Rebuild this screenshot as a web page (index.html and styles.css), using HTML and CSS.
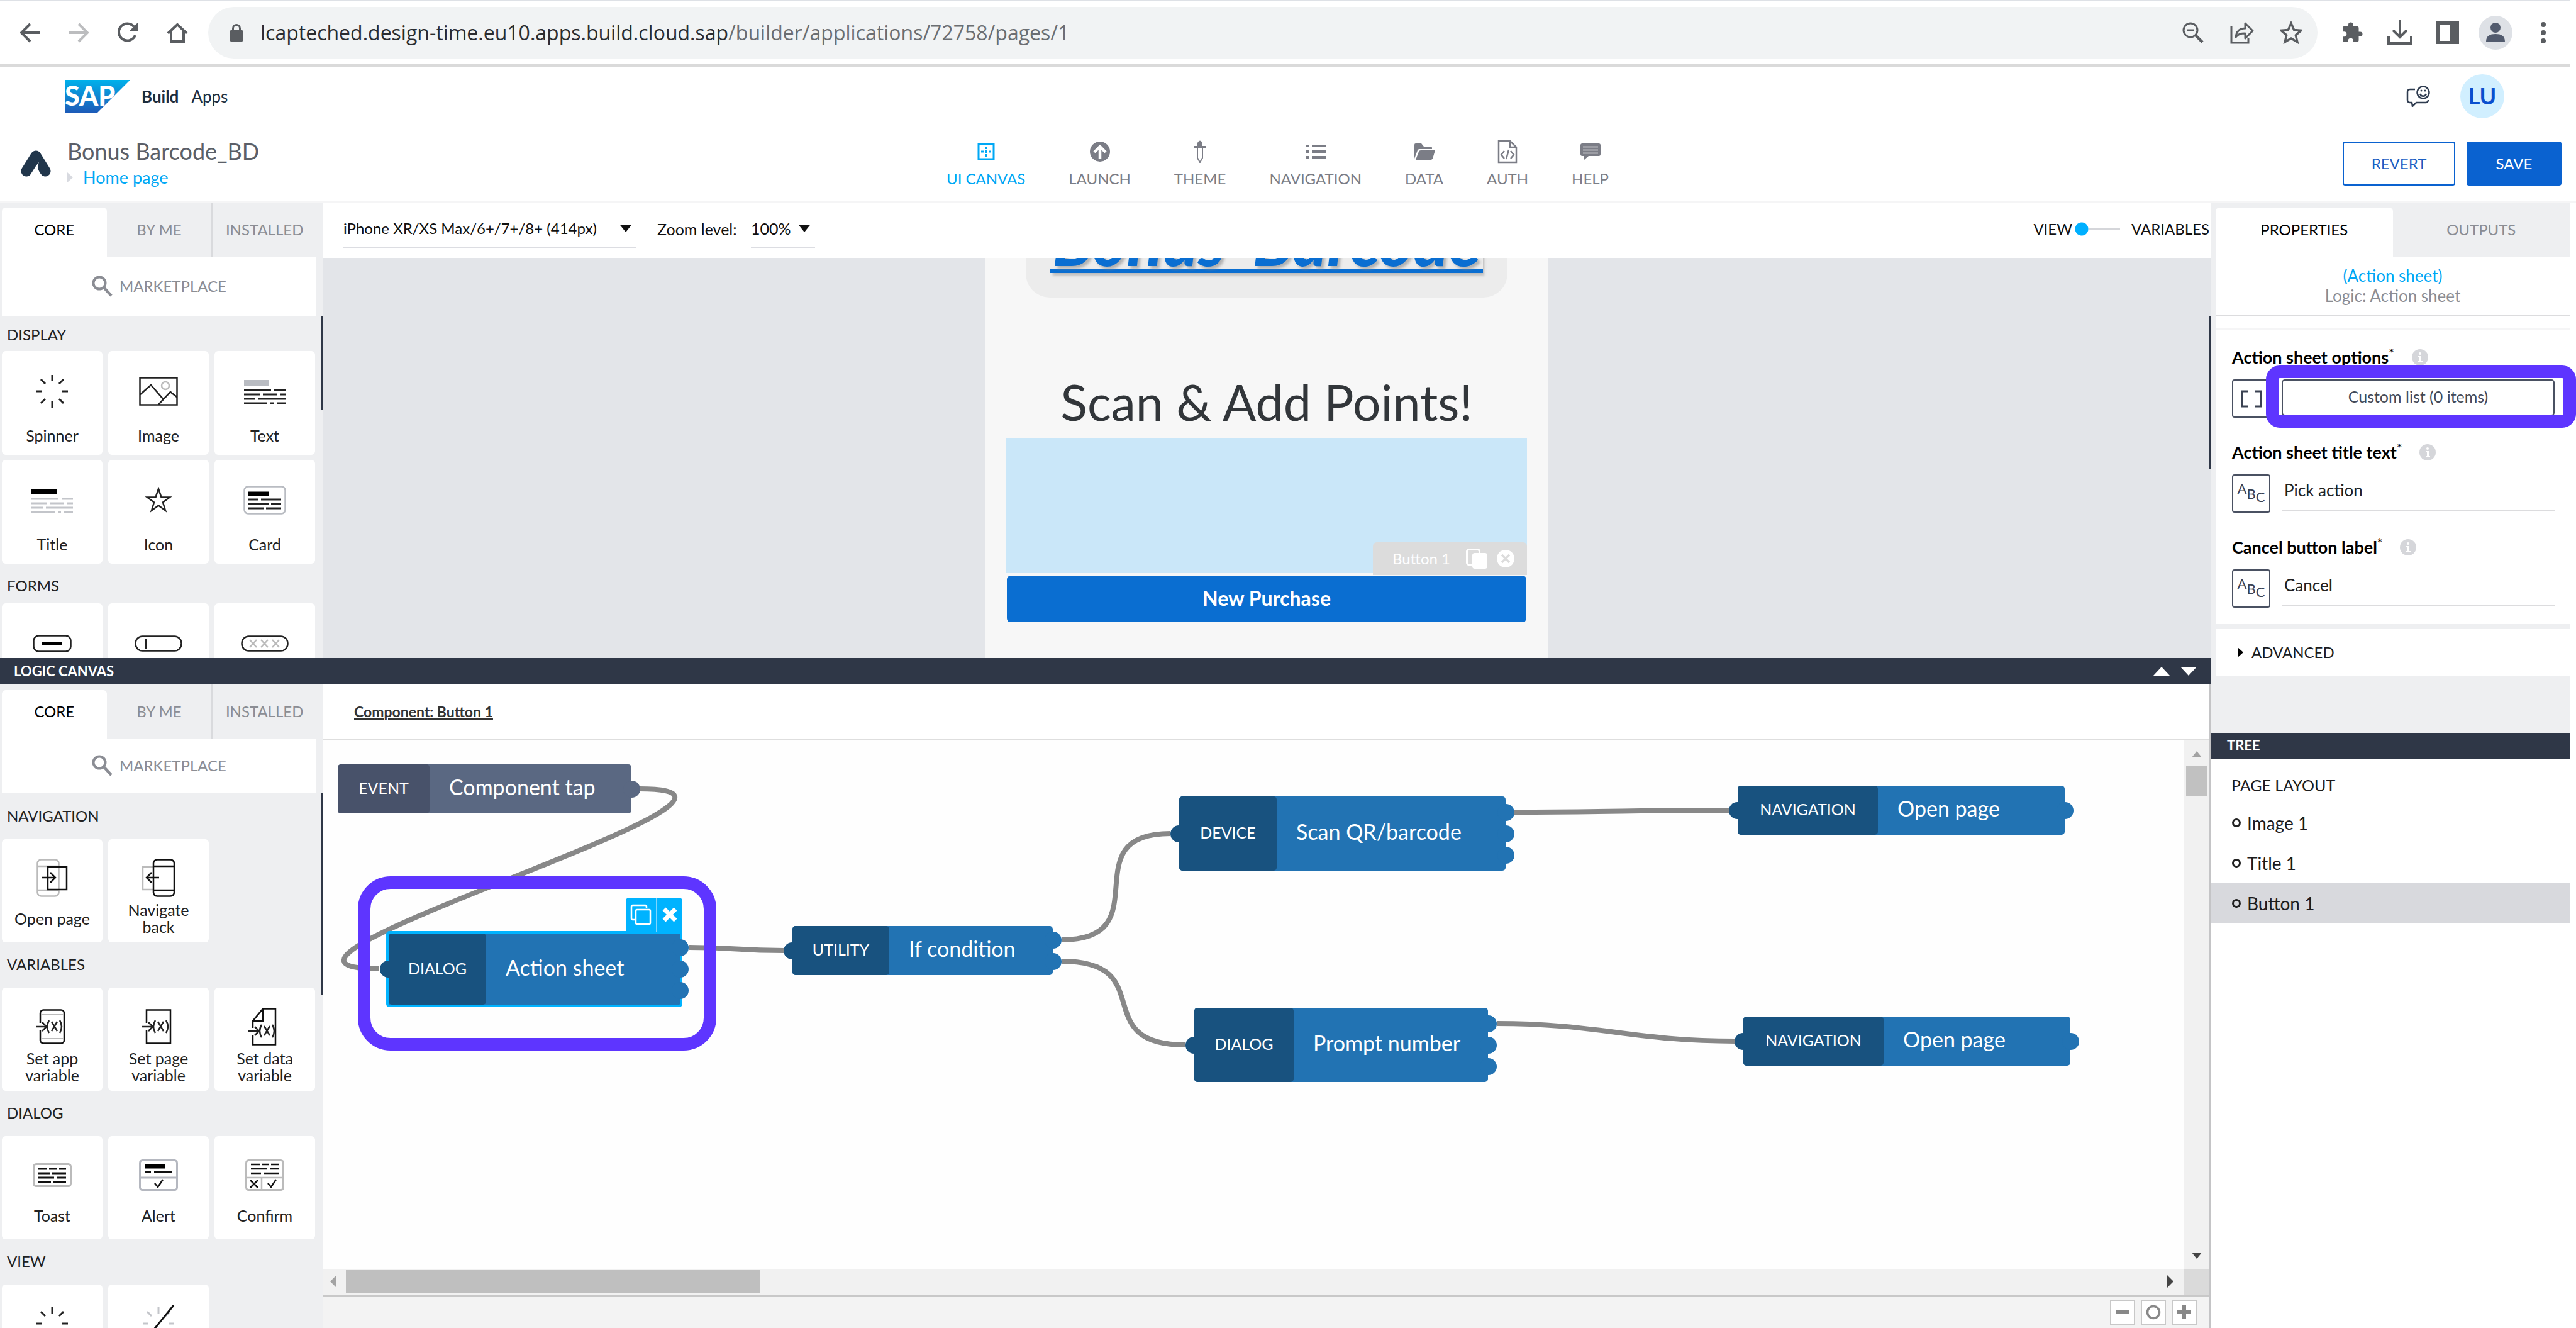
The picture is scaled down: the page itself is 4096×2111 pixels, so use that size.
FILE: index.html
```html
<!DOCTYPE html>
<html lang="en">
<head>
<meta charset="utf-8">
<title>Bonus Barcode_BD</title>
<link rel="stylesheet" href="styles.css">
</head>
<body>
<svg class="defs" aria-hidden="true">
  <symbol id="search" viewBox="0 0 34 34"><circle cx="12" cy="12" r="9.5" fill="none" stroke="currentColor" stroke-width="4"/><path d="M19 19L31 32" stroke="currentColor" stroke-width="4.5"/></symbol>
  <symbol id="spinner" viewBox="0 0 52 52"><path d="M26 0v10M26 42v10M1 26h9M42 26h9M8 7l7 7M37 38l7 7M44 7l-7 7M15 38l-7 7" stroke="currentColor" stroke-width="3"/></symbol>
  <symbol id="lines" viewBox="0 0 66 24"><path d="M0 2h43M48 2h18M0 9h25M30 9h22M57 9h9M0 16h18M23 16h43M0 23h37M42 23h5M52 23h14" stroke="currentColor" stroke-width="3"/></symbol>
  <symbol id="tri" viewBox="0 0 16 10"><path d="M0 0h16L8 10z" fill="currentColor"/></symbol>
  <symbol id="info" viewBox="0 0 26 26"><circle cx="13" cy="13" r="13" fill="#d5d6da"/><circle cx="13" cy="7" r="2" fill="#fff"/><path d="M10 11h5v8h2v2h-7v-2h2v-6h-2z" fill="#fff"/></symbol>
  <symbol id="setx" viewBox="0 0 56 56"><path d="M2 28h15M12 21l7 7-7 7" fill="none" stroke="currentColor" stroke-width="2.5"/><path d="M23 18q-6 10 0 20M40 18q6 10 0 20M27 20l9 15M36 20l-9 15" fill="none" stroke="currentColor" stroke-width="2.5"/></symbol>
</svg>

<header class="browser">
  <nav class="browser-nav">
    <button aria-label="Back"><svg width="32" height="32" viewBox="0 0 32 32"><path d="M31 16H3M16 2L2 16l14 14" fill="none" stroke="#5a5d61" stroke-width="4"/></svg></button>
    <button aria-label="Forward"><svg width="32" height="32" viewBox="0 0 32 32"><path d="M1 16h28M16 2l14 14-14 14" fill="none" stroke="#bcbdbf" stroke-width="4"/></svg></button>
    <button aria-label="Reload"><svg width="34" height="34" viewBox="0 0 34 34"><path d="M27 7.500A13.500 13.500 0 1 0 29 21" fill="none" stroke="#5a5d61" stroke-width="4"/><path d="M33 1v14H19z" fill="#5a5d61"/></svg></button>
    <button aria-label="Home"><svg width="34" height="34" viewBox="0 0 34 34"><path d="M2 18L17 4l15 14M7 14v17h20V14" fill="none" stroke="#5a5d61" stroke-width="4"/></svg></button>
  </nav>
  <div class="address">
    <svg width="22" height="28" viewBox="0 0 22 28"><rect x="0" y="10" width="22" height="18" rx="3" fill="#5a5d61"/><path d="M5.500 11V7a5.500 5.500 0 0 1 11 0v4" fill="none" stroke="#5a5d61" stroke-width="3"/></svg>
    <span class="url"><b>lcapteched.design-time.eu10.apps.build.cloud.sap</b>/builder/applications/72758/pages/1</span>
    <div class="address-tools">
      <svg width="36" height="36" viewBox="0 0 36 36"><circle cx="14" cy="14" r="11" fill="none" stroke="#5a5d61" stroke-width="3"/><path d="M8.500 14h11" stroke="#5a5d61" stroke-width="3"/><path d="M22 22l11 11" stroke="#5a5d61" stroke-width="4.500"/></svg>
      <svg width="38" height="38" viewBox="0 0 38 38"><path d="M2 9v26h27v-7" fill="none" stroke="#5a5d61" stroke-width="3"/><path d="M9 26c1-9 6-14 15-14V4l12 12-12 12v-8c-7 0-11 1-15 6z" fill="none" stroke="#5a5d61" stroke-width="3" stroke-linejoin="round"/></svg>
      <svg width="36" height="36" viewBox="0 0 36 36"><path d="M18 3l4.600 10.400 11.300 1-8.600 7.400 2.600 11L18 27l-9.900 5.800 2.600-11L2.100 14.400l11.300-1z" fill="none" stroke="#5a5d61" stroke-width="3.500"/></svg>
    </div>
  </div>
  <div class="browser-tools">
    <svg width="36" height="36" viewBox="0 0 24 24"><path d="M20.500 11H19V7c0-1.100-.9-2-2-2h-4V3.500a2.500 2.500 0 0 0-5 0V5H4c-1.100 0-2 .9-2 2v3.800h1.500a2.700 2.700 0 0 1 0 5.400H2V20c0 1.100.9 2 2 2h3.800v-1.500a2.700 2.700 0 0 1 5.400 0V22H17c1.100 0 2-.9 2-2v-4h1.500a2.500 2.500 0 0 0 0-5z" fill="#5a5d61"/></svg>
    <svg width="40" height="40" viewBox="0 0 40 40"><path d="M20 0v26M9 16l11 11 11-11M2 26v11h36V26" fill="none" stroke="#5a5d61" stroke-width="4"/></svg>
    <svg width="36" height="36" viewBox="0 0 36 36"><path d="M0 0h36v36H0zM5 5v26h16V5z" fill="#5a5d61" fill-rule="evenodd"/></svg>
    <svg width="54" height="54" viewBox="0 0 54 54"><circle cx="27" cy="27" r="27" fill="#dee1e6"/><circle cx="27" cy="19" r="8" fill="#525b6e"/><path d="M12 41c0-9 6-12 15-12s15 3 15 12z" fill="#525b6e"/></svg>
    <svg width="10" height="34" viewBox="0 0 10 34"><circle cx="5" cy="4" r="4" fill="#5a5d61"/><circle cx="5" cy="17" r="4" fill="#5a5d61"/><circle cx="5" cy="30" r="4" fill="#5a5d61"/></svg>
  </div>
</header>

<div class="suite">
  <svg class="sap" width="104" height="52" viewBox="0 0 104 52"><defs><linearGradient id="sapg" x1="0" y1="0" x2="0" y2="1"><stop offset="0" stop-color="#00b1eb"/><stop offset="1" stop-color="#1d5bb8"/></linearGradient></defs><path d="M0 0h104L52 52H0z" fill="url(#sapg)"/><text x="0" y="41" class="sap-word">SAP</text></svg>
  <strong>Build</strong><span>Apps</span>
  <svg class="feedback" width="38" height="34" viewBox="0 0 38 34"><path d="M14 6H6a4 4 0 0 0-4 4v13a4 4 0 0 0 4 4h3l1 6 6-6h15a4 4 0 0 0 4-4" fill="none" stroke="#2f3c50" stroke-width="2.500"/><circle cx="27" cy="11" r="9.500" fill="none" stroke="#2f3c50" stroke-width="2.500"/><path d="M22 13c2 5 8 5 10 0" fill="none" stroke="#2f3c50" stroke-width="2.500"/><circle cx="24" cy="8" r="1.500" fill="#2f3c50"/><circle cx="30" cy="8" r="1.500" fill="#2f3c50"/></svg>
  <span class="user">LU</span>
</div>

<div class="appbar">
  <svg width="48" height="42" viewBox="0 0 48 42"><path d="M9 33L24 9l15 24" fill="none" stroke="#21364b" stroke-width="17" stroke-linecap="round" stroke-linejoin="round"/><path d="M28.500 18.500L16 38v4h16l-1-4c-3-4-4-9-2.500-19.500z" fill="#fff"/></svg>
  <div class="crumbs"><h1>Bonus Barcode_BD</h1><a href="#home"><svg width="9" height="16" viewBox="0 0 9 16"><path d="M0 0l9 8-9 8z" fill="#d8dae0"/></svg>Home page</a></div>
  <nav class="modes">
    <a href="#ui" class="on"><svg width="28" height="28" viewBox="0 0 28 28"><rect x="2" y="2" width="24" height="24" fill="none" stroke="currentColor" stroke-width="3"/><path d="M14 6v4M14 12v4M14 18v4M6 14h4M18 14h4" stroke="currentColor" stroke-width="3"/></svg>UI CANVAS</a>
    <a href="#launch"><svg width="32" height="32" viewBox="0 0 32 32"><circle cx="16" cy="16" r="16" fill="currentColor"/><path d="M16 27V9M7 17l9-9 9 9" fill="none" stroke="#fff" stroke-width="4.500"/></svg>LAUNCH</a>
    <a href="#theme"><svg width="20" height="36" viewBox="0 0 20 36"><path d="M6 9V4q4-7 8 0v5h5v4H1V9z" fill="currentColor"/><path d="M6 13v15l4 7 4-7V13" fill="none" stroke="currentColor" stroke-width="2"/></svg>THEME</a>
    <a href="#nav"><svg width="32" height="24" viewBox="0 0 32 24"><path d="M0 3h5M10 3h22M0 12h5M10 12h22M0 21h5M10 21h22" stroke="currentColor" stroke-width="4"/></svg>NAVIGATION</a>
    <a href="#data"><svg width="34" height="26" viewBox="0 0 34 26"><path d="M1 24V2q0-2 2-2h9l4 5h11q2 0 2 2v2H9q-2 0-3 2z" fill="currentColor"/><path d="M3 26l5-13q1-2 3-2h23l-4 13q-1 2-3 2z" fill="currentColor"/></svg>DATA</a>
    <a href="#auth"><svg width="32" height="38" viewBox="0 0 32 38"><path d="M2 2h18l10 10v24H2zM20 2v10h10" fill="none" stroke="currentColor" stroke-width="2.500"/><path d="M11 18l-5 6 5 6M21 18l5 6-5 6M18 16l-4 15" fill="none" stroke="currentColor" stroke-width="2.500"/></svg>AUTH</a>
    <a href="#help"><svg width="32" height="26" viewBox="0 0 32 26"><path d="M3 0h26q3 0 3 3v14q0 3-3 3H13l-7 6v-6H3q-3 0-3-3V3q0-3 3-3z" fill="currentColor"/><path d="M4 5.500h24M4 10.500h24M4 15.500h24" stroke="#fff" stroke-width="1.500"/></svg>HELP</a>
  </nav>
  <div class="actions"><button class="revert">REVERT</button><button class="save">SAVE</button></div>
</div>

<div class="workspace">
  <main class="main">
    <section class="upper">
      <aside class="palette">
        <div class="tabs"><button class="on">CORE</button><button>BY ME</button><button class="split">INSTALLED</button></div>
        <button class="market"><svg width="34" height="34"><use href="#search"/></svg>MARKETPLACE</button>
        <div class="groups">
          <h2>DISPLAY</h2>
          <div class="cards">
            <button><i><svg width="52" height="52"><use href="#spinner"/></svg></i><span>Spinner</span></button>
            <button><i><svg width="62" height="46" viewBox="0 0 62 46" fill="none" stroke="#222" stroke-width="2.500"><path d="M1.500 1.500h59v43h-59zM2 28l17-15 20 23M31 44l19-20 10 8"/><circle cx="42" cy="14" r="6" stroke="#bbb"/></svg></i><span>Image</span></button>
            <button><i class="stack"><em class="bar pale"></em><svg width="66" height="24"><use href="#lines"/></svg></i><span>Text</span></button>
            <button><i class="stack"><em class="bar"></em><svg class="pale-lines" width="66" height="24"><use href="#lines"/></svg></i><span>Title</span></button>
            <button><i><svg width="42" height="42" viewBox="0 0 42 42"><path d="M21 3l4.500 13.500H39L28 24.500l4 13-11-8-11 8 4-13L3 16.500h13.500z" fill="none" stroke="#222" stroke-width="2.500"/></svg></i><span>Icon</span></button>
            <button><i><svg width="68" height="46" viewBox="0 0 68 46"><rect x="1.500" y="1.500" width="65" height="43" rx="6" fill="none" stroke="#b9bcc2" stroke-width="2.500"/><path d="M8 13h33" stroke="#000" stroke-width="7"/><path d="M8 22h16M28 22h32M8 29h32M44 29h16M8 36h24M36 36h24" stroke="#222" stroke-width="3"/></svg></i><span>Card</span></button>
          </div>
          <h2>FORMS</h2>
          <div class="cards">
            <button aria-label="Button"><i><svg width="62" height="28" viewBox="0 0 62 28"><rect x="1.500" y="1.500" width="59" height="25" rx="8" fill="none" stroke="#222" stroke-width="2.500"/><path d="M15 14h32" stroke="#000" stroke-width="5"/></svg></i></button>
            <button aria-label="Input field"><i><svg width="76" height="26" viewBox="0 0 76 26"><rect x="1.500" y="1.500" width="73" height="23" rx="11" fill="none" stroke="#222" stroke-width="2.500"/><path d="M18 5v16" stroke="#222" stroke-width="2.500"/></svg></i></button>
            <button aria-label="Password"><i><svg width="76" height="26" viewBox="0 0 76 26"><rect x="1.500" y="1.500" width="73" height="23" rx="11" fill="none" stroke="#222" stroke-width="2.500"/><path d="M14 7l11 12M25 7L14 19M32 7l11 12M43 7L32 19M50 7l11 12M61 7L50 19" stroke="#bbb" stroke-width="2.500"/></svg></i></button>
          </div>
        </div>
        <div class="rail"></div>
      </aside>
      <div class="preview">
        <div class="view-bar">
          <label class="drop wide"><select aria-label="Device"><option>iPhone XR/XS Max/6+/7+/8+ (414px)</option></select><svg width="18" height="11"><use href="#tri"/></svg></label>
          <span class="zoom-label">Zoom level:</span>
          <label class="drop"><select aria-label="Zoom level"><option>100%</option></select><svg width="18" height="11"><use href="#tri"/></svg></label>
          <label class="switch">VIEW<input type="checkbox" role="switch" aria-label="View or variables"><span>VARIABLES</span></label>
        </div>
        <div class="stage">
          <div class="phone">
            <div class="banner"><div class="banner-word">Bonus&nbsp; Barcode</div></div>
            <h2>Scan &amp; Add Points!</h2>
            <div class="drop-zone"><div class="tag">Button 1
              <svg width="34" height="32" viewBox="0 0 34 32"><rect x="1.500" y="1.500" width="20" height="24" rx="3" fill="none" stroke="#fff" stroke-width="3"/><rect x="10" y="7" width="24" height="25" rx="4" fill="#fff"/></svg>
              <svg width="28" height="28" viewBox="0 0 28 28"><circle cx="14" cy="14" r="14" fill="#fff"/><path d="M8 8l12 12M20 8L8 20" stroke="#dcdcdc" stroke-width="3.500"/></svg></div></div>
            <button class="purchase">New Purchase</button>
          </div>
          <div class="rail right"></div>
        </div>
      </div>
    </section>

    <div class="logic-bar">LOGIC CANVAS<span class="arrows"><svg width="26" height="14" viewBox="0 0 26 14"><path d="M0 14L13 0l13 14z" fill="#fff"/></svg><svg width="26" height="14" viewBox="0 0 26 14"><path d="M0 0h26L13 14z" fill="#fff"/></svg></span></div>

    <section class="lower">
      <aside class="palette logic">
        <div class="tabs"><button class="on">CORE</button><button>BY ME</button><button class="split">INSTALLED</button></div>
        <button class="market"><svg width="34" height="34"><use href="#search"/></svg>MARKETPLACE</button>
        <div class="groups">
          <h2>NAVIGATION</h2>
          <div class="cards">
            <button><i><svg width="50" height="62" viewBox="0 0 50 62" fill="none" stroke-width="2.500"><rect x="1.500" y="1.500" width="34" height="58" rx="6" stroke="#bbb"/><path d="M2 12h33M2 50h33" stroke="#bbb"/><path d="M18 13h30v36H18zM9 30h20M22 22l8 8-8 8" stroke="#111"/></svg></i><span>Open page</span></button>
            <button><i><svg width="54" height="62" viewBox="0 0 54 62" fill="none" stroke-width="2.500"><path d="M20 13H2v36h18" stroke="#bbb"/><rect x="19" y="1.500" width="33" height="58" rx="6" stroke="#111"/><path d="M19 12h33M19 50h33M28 30H8M16 22l-8 8 8 8" stroke="#111"/></svg></i><span>Navigate back</span></button>
          </div>
          <h2>VARIABLES</h2>
          <div class="cards">
            <button><i><svg width="56" height="56" viewBox="0 0 56 56"><rect x="9" y="1.500" width="38" height="53" rx="5" fill="none" stroke="#111" stroke-width="2.500"/><path d="M10 9h36M10 47h36" stroke="#bbb" stroke-width="2"/><path d="M9 22v12" stroke="#fff" stroke-width="5"/><use href="#setx" width="56" height="56"/></svg></i><span>Set app variable</span></button>
            <button><i><svg width="56" height="56" viewBox="0 0 56 56"><path d="M9 1.500h38v53H9z" fill="none" stroke="#111" stroke-width="2.500"/><path d="M9 22v12" stroke="#fff" stroke-width="5"/><use href="#setx" width="56" height="56"/></svg></i><span>Set page variable</span></button>
            <button><i><svg width="56" height="60" viewBox="0 0 56 60"><path d="M25 1.500h20v57H9V21zM25 2v19H9" fill="none" stroke="#111" stroke-width="2.500"/><path d="M9 32v12" stroke="#fff" stroke-width="5"/><use href="#setx" y="9" width="56" height="56"/></svg></i><span>Set data variable</span></button>
          </div>
          <h2>DIALOG</h2>
          <div class="cards">
            <button><i><svg width="62" height="38" viewBox="0 0 62 38"><rect x="1.500" y="1.500" width="59" height="35" rx="4" fill="none" stroke="#bbb" stroke-width="3"/><path d="M9 9h13M26 9h12M42 9h11M9 16h18M31 16h22M9 23h25M38 23h15M9 30h20M33 30h20" stroke="#111" stroke-width="3"/></svg></i><span>Toast</span></button>
            <button><i><svg width="62" height="50" viewBox="0 0 62 50" fill="none"><rect x="1.500" y="1.500" width="59" height="47" rx="4" stroke="#b5b8c0" stroke-width="3"/><path d="M2 29h58" stroke="#b5b8c0" stroke-width="3"/><path d="M9 11h32" stroke="#000" stroke-width="7"/><path d="M9 20h10M24 20h28M25 38l5 6 8-12" stroke="#111" stroke-width="2.500"/></svg></i><span>Alert</span></button>
            <button><i><svg width="62" height="50" viewBox="0 0 62 50" fill="none"><rect x="1.500" y="1.500" width="59" height="47" rx="4" stroke="#bbb" stroke-width="3"/><path d="M2 29h58M26 29v20" stroke="#bbb" stroke-width="2.500"/><path d="M9 8h14M27 8h10M41 8h12M9 15h26M39 15h14M9 22h16M29 22h24M8 33l12 12M20 33L8 45M36 38l5 6 8-12" stroke="#111" stroke-width="2.500"/></svg></i><span>Confirm</span></button>
          </div>
          <h2>VIEW</h2>
          <div class="cards">
            <button aria-label="Show spinner"><i><svg width="52" height="52"><use href="#spinner"/></svg></i></button>
            <button aria-label="Hide spinner"><i><svg width="52" height="58" viewBox="0 0 52 58"><use href="#spinner" class="pale-lines" y="3" width="52" height="52"/><path d="M50 0L6 54" stroke="#111" stroke-width="3"/></svg></i></button>
          </div>
        </div>
        <div class="rail"></div>
      </aside>
      <div class="flow">
        <div class="flow-head"><a href="#component">Component: Button 1</a></div>
        <div class="canvas-grid">
          <div class="canvas">
            <svg class="wires" width="100%" height="100%">
              <path d="M504 77C804 77-210 363 90 363"/>
              <path d="M583 329C658 329 658 334 733 334"/>
              <path d="M1175 317C1335 317 1188 148 1348 148"/>
              <path d="M1175 351C1333 351 1214 484 1372 484"/>
              <path d="M1895 114C2055 114 2077 111 2237 111"/>
              <path d="M1867 450C2027 450 2086 478 2246 478"/>
            </svg>
            <div class="node event"><b>EVENT</b><span>Component tap</span><div class="out"><i></i></div></div>
            <div class="node sheet"><b>DIALOG</b><span>Action sheet</span><div class="in"><i></i></div><div class="out"><i></i><i></i><i></i></div></div>
            <div class="node-tools"><button aria-label="Copy"><svg width="34" height="34" viewBox="0 0 34 34" fill="none" stroke="#fff" stroke-width="2.500"><path d="M7 25H4q-2 0-2-2V4q0-2 2-2h20q2 0 2 2v3"/><rect x="9" y="9" width="23" height="23" rx="2"/></svg></button><button aria-label="Delete"><svg width="24" height="24" viewBox="0 0 24 24"><path d="M3 3l18 18M21 3L3 21" stroke="#fff" stroke-width="7"/></svg></button></div>
            <div class="node util"><b>UTILITY</b><span>If condition</span><div class="in"><i></i></div><div class="out"><i></i><i></i></div></div>
            <div class="node device"><b>DEVICE</b><span>Scan QR/barcode</span><div class="in"><i></i></div><div class="out"><i></i><i></i><i></i></div></div>
            <div class="node prompt"><b>DIALOG</b><span>Prompt number</span><div class="in"><i></i></div><div class="out"><i></i><i></i><i></i></div></div>
            <div class="node nav-a"><b>NAVIGATION</b><span>Open page</span><div class="in"><i></i></div><div class="out"><i></i></div></div>
            <div class="node nav-b"><b>NAVIGATION</b><span>Open page</span><div class="in"><i></i></div><div class="out"><i></i></div></div>
            <div class="ring sheet-ring"></div>
          </div>
          <div class="vscroll"><svg class="up pale-arrow" width="20" height="10"><use href="#tri"/></svg><div class="thumb"></div><svg class="down" width="20" height="10"><use href="#tri"/></svg></div>
          <div class="hscroll"><svg width="10" height="20" viewBox="0 0 10 20"><path d="M10 0v20L0 10z" fill="#a3a3a3"/></svg><div class="thumb"></div><svg class="end" width="10" height="20" viewBox="0 0 10 20"><path d="M0 0v20l10-10z" fill="#444"/></svg></div>
          <div class="corner"></div>
        </div>
        <div class="flow-foot">
          <button aria-label="Zoom out"><svg width="22" height="22" viewBox="0 0 22 22"><path d="M0 11h22" stroke="#888" stroke-width="6"/></svg></button>
          <button aria-label="Reset zoom"><svg width="24" height="24" viewBox="0 0 24 24"><circle cx="12" cy="12" r="9.500" fill="none" stroke="#888" stroke-width="3.500"/></svg></button>
          <button aria-label="Zoom in"><svg width="22" height="22" viewBox="0 0 22 22"><path d="M0 11h22M11 0v22" stroke="#888" stroke-width="6"/></svg></button>
        </div>
      </div>
    </section>
  </main>

  <aside class="inspector">
    <div class="tabs"><button class="on">PROPERTIES</button><button>OUTPUTS</button></div>
    <div class="who"><a href="#sheet">(Action sheet)</a><span>Logic: Action sheet</span></div>
    <div class="spacer"></div>
    <form class="fields">
      <div class="field"><label for="f1">Action sheet options<sup>*</sup></label><svg width="26" height="26"><use href="#info"/></svg>
        <div class="row"><button type="button" class="kind" aria-label="List"><svg width="34" height="28" viewBox="0 0 34 28"><path d="M11 2H2v24h9M23 2h9v24h-9" fill="none" stroke="#3b4252" stroke-width="3"/></svg></button><button type="button" id="f1" class="custom">Custom list (0 items)</button><div class="ring list-ring"></div></div></div>
      <div class="field"><label for="f2">Action sheet title text<sup>*</sup></label><svg width="26" height="26"><use href="#info"/></svg>
        <div class="row"><button type="button" class="kind abc"><i>A</i><i>B</i><i>C</i></button><input id="f2" value="Pick action"></div></div>
      <div class="field"><label for="f3">Cancel button label<sup>*</sup></label><svg width="26" height="26"><use href="#info"/></svg>
        <div class="row"><button type="button" class="kind abc"><i>A</i><i>B</i><i>C</i></button><input id="f3" value="Cancel"></div></div>
    </form>
    <button class="advanced"><svg width="9" height="16" viewBox="0 0 9 16"><path d="M0 0l9 8-9 8z"/></svg>ADVANCED</button>
    <section class="tree">
      <h2>TREE</h2>
      <h3>PAGE LAYOUT</h3>
      <ul><li>Image 1</li><li>Title 1</li><li class="on">Button 1</li></ul>
    </section>
  </aside>
</div>
</body>
</html>
```
FILE: styles.css
```css
*, *::before { box-sizing: border-box; }
html, body { height: 100%; }
body {
  margin: 0;
  display: flex;
  flex-direction: column;
  overflow: hidden;
  background: #fff;
  color: #1c1c1e;
  font-family: Lato, sans-serif;
  font-size: 26px;
  line-height: 32px;
}
button, input, select { font: inherit; color: inherit; background: none; border: 0; padding: 0; margin: 0; border-radius: 0; }
button { display: flex; align-items: center; justify-content: center; }
h1, h2, h3, ul { margin: 0; padding: 0; font-weight: 400; font-size: inherit; }
a { color: inherit; text-decoration: none; }
i, em { font-style: normal; }
svg { flex: none; display: block; }
.defs { position: absolute; width: 0; height: 0; }

/* browser chrome */
.browser {
  display: flex; align-items: center; height: 106px; flex: none;
  border-top: 2px solid #dee1e6; border-bottom: 4px solid #dadada;
  margin-right: 10px; padding-left: 32px;
}
.browser-nav { display: flex; width: 299px; gap: 45px; }
.address {
  flex: 1; display: flex; align-items: center; height: 82px;
  background: #f1f3f4; border-radius: 41px; padding: 0 24px 0 34px;
}
.url { font-family: "Open Sans", sans-serif; font-size: 32px; line-height: 44px; color: #6b6e72; margin-left: 27px; }
.url b { font-weight: 400; color: #2a2c30; }
.address-tools { display: flex; align-items: center; gap: 41px; margin-left: auto; }
.browser-tools { display: flex; align-items: center; gap: 38px; padding: 0 37px; }
.browser-tools svg:nth-child(4) { margin: 0 -7px; }
.browser-tools svg:last-child { margin-left: 13px; }

/* suite header */
.suite { display: flex; align-items: center; height: 94px; flex: none; padding: 0 114px 0 103px; color: #1d2d3e; }
.suite strong { margin-left: 18px; }
.suite strong + span { margin-left: 20px; }
.sap-word { font: 900 43px Lato, sans-serif; fill: #fff; }
.feedback { margin-left: auto; margin-right: 48px; }
.user { width: 70px; height: 70px; border-radius: 50%; background: #d1efff; color: #0a4fcf; font-size: 36px; font-weight: 700; line-height: 68px; text-align: center; }

/* application header */
.appbar { display: flex; align-items: center; height: 122px; flex: none; padding: 0 23px 0 33px; border-bottom: 2px solid #f5f5f6; }
.crumbs { width: 1424px; padding-left: 26px; }
.crumbs h1 { font-size: 36px; line-height: 44px; color: #5b5f68; }
.crumbs a { display: flex; align-items: center; gap: 16px; font-size: 27px; line-height: 40px; color: #00a8f5; }
.modes { display: flex; gap: 69px; color: #7b7d86; font-size: 24px; line-height: 30px; }
.modes a { display: grid; grid-template-rows: 40px 30px; gap: 8px; justify-items: center; align-items: center; }
.modes .on { color: #00a8f5; }
.actions { display: flex; gap: 18px; margin-left: auto; font-size: 24px; }
.actions button { height: 70px; border-radius: 4px; }
.revert { width: 179px; border: 2px solid #0a62d0; color: #1b5fc4; }
.save { width: 151px; background: #0a62d0; color: #fff; }

/* workspace split */
.workspace { flex: 1; display: flex; min-height: 0; margin-right: 10px; }
.main { flex: 1; display: flex; flex-direction: column; min-width: 0; }
.upper { flex: 724 1 0; display: flex; min-height: 0; }
.lower { flex: 1023 1 0; display: flex; min-height: 0; }

/* component palette */
.palette { position: relative; width: 513px; flex: none; display: flex; flex-direction: column; overflow: hidden; background: #eeeff1; padding: 8px 10px 0 3px; }
.tabs { display: flex; height: 79px; flex: none; font-size: 24px; color: #8b8d94; }
.tabs button { padding-bottom: 10px; }
.palette .tabs button { width: 167px; }
.palette .tabs .split { border-left: 2px solid #d9dadd; margin-top: -8px; padding-bottom: 2px; }
.tabs .on { background: #fff; color: #000; border-radius: 6px 6px 0 0; }
.market { height: 93px; width: 500px; flex: none; padding-bottom: 2px; background: #fff; color: #8b8d94; font-size: 24px; gap: 10px; }
.groups h2 { font-size: 24px; height: 63px; line-height: 70px; padding-left: 8px; color: #222; }
.groups h2:first-child { height: 56px; line-height: 60px; }
.cards { display: grid; grid-template-columns: repeat(3, 160px); gap: 8px 9px; }
.cards button { flex-direction: column; justify-content: flex-start; height: 165px; padding-top: 30px; background: #fff; border-radius: 6px; font-size: 25px; line-height: 27px; color: #222; }
.cards i { display: flex; align-items: center; justify-content: center; height: 68px; }
.cards span { display: flex; align-items: center; justify-content: center; height: 60px; margin-top: 6px; width: 112px; white-space: nowrap; }
.cards .stack { flex-direction: column; align-items: flex-start; gap: 5px; padding-top: 2px; }
.bar { width: 40px; height: 9px; background: #000; }
.bar.pale { background: #b9bcc2; }
.pale-lines { color: #c3c5ca; }
.rail { position: absolute; right: 0; top: 181px; width: 2px; height: 148px; background: #2f3747; }
.logic { padding-top: 9px; }
.logic .tabs { height: 78px; }
.logic .tabs .split { margin-top: -9px; }
.logic .market { height: 85px; }
.logic h2 { height: 72px; }
.logic h2:first-child { height: 74px; line-height: 74px; }
.logic .cards button { height: 164px; padding-top: 28px; }
.logic .cards span { margin-top: 0; white-space: normal; }
.logic h2:first-child + .cards button:first-child span { width: 140px; }
.logic .rail { top: 172px; height: 322px; }

/* device preview */
.preview { flex: 1; display: flex; flex-direction: column; min-width: 0; }
.view-bar { display: flex; align-items: center; height: 88px; flex: none; padding: 0 2px 4px 33px; font-size: 25px; color: #111; }
.drop { display: flex; align-items: center; width: 102px; height: 62px; border-bottom: 2px solid #dcdde2; padding-right: 8px; }
.drop.wide { width: 466px; }
.drop.wide select { font-size: 24px; }
.drop select { appearance: none; flex: 1; min-width: 0; color: #111; }
.zoom-label { margin: 0 15px 0 33px; width: 134px; white-space: nowrap; }
.switch { display: flex; align-items: center; margin-left: auto; font-size: 24px; }
.switch input { appearance: none; width: 72px; height: 22px; margin: 0 18px 0 4px; background: radial-gradient(circle at 11px 11px, #00b0ff 10px, transparent 11px), linear-gradient(#d5d6da, #d5d6da) 22px 9px / 50px 4px no-repeat; }
.stage { position: relative; flex: 1; display: flex; justify-content: center; background: #e3e5e9; overflow: hidden; }
.phone { width: 896px; background: #f7f7f7; display: flex; flex-direction: column; align-items: center; }
.banner { width: 766px; height: 63px; flex: none; background: #ececec; border-radius: 0 0 38px 38px; overflow: hidden; display: flex; align-items: flex-end; justify-content: center; padding-bottom: 39px; }
.banner-word { flex: none; width: 688px; font-size: 104px; font-style: italic; font-weight: 900; line-height: 66px; padding-bottom: 12px; color: #0a6ed1; border-bottom: 6px solid #0a6ed1; text-align: center; text-shadow: 4px 4px 4px #8889; box-shadow: 3px 5px 4px -1px #8887; white-space: nowrap; }
.phone h2 { margin-top: 108px; font-size: 79px; line-height: 116px; color: #32363a; white-space: nowrap; }
.drop-zone { width: 828px; height: 214px; flex: none; background: #cae7f9; display: flex; align-items: flex-end; justify-content: flex-end; }
.tag { display: flex; align-items: center; gap: 15px; height: 52px; margin-bottom: -3px; padding: 0 20px 0 31px; background: #dcdcdc; border-radius: 6px 6px 0 0; color: #fff; font-size: 24px; }
.tag svg:first-of-type { margin-left: 10px; }
.purchase { width: 826px; height: 74px; flex: none; margin-top: 4px; padding-bottom: 2px; background: #0a6ed1; color: #fff; border-radius: 6px; font-size: 32px; font-weight: 700; }
.rail.right { top: 92px; height: 243px; }

/* logic canvas */
.logic-bar { display: flex; align-items: center; height: 42px; flex: none; padding: 0 22px; background: #2f3747; color: #fff; font-size: 22px; font-weight: 700; }
.arrows { margin-left: auto; display: flex; gap: 17px; }
.flow { flex: 1; min-width: 0; display: flex; flex-direction: column; border-right: 2px solid #c4c4c6; }
.flow-head { height: 89px; flex: none; padding-left: 50px; border-bottom: 2px solid #dedede; font-size: 23px; font-weight: 700; line-height: 86px; color: #333; }
.flow-head a { text-decoration: underline; }
.canvas-grid { flex: 1; min-height: 0; display: grid; grid-template: 1fr 41px / 1fr 41px; }
.canvas { position: relative; overflow: hidden; background: #fefefe; }
.wires { position: absolute; inset: 0; }
.wires path { fill: none; stroke: #888; stroke-width: 8; }
.vscroll, .hscroll { display: flex; align-items: center; background: #f1f1f1; }
.vscroll { flex-direction: column; padding: 17px 0 17px; color: #444; }
.up { transform: rotate(180deg); }
.pale-arrow { color: #a3a3a3; }
.vscroll .thumb { width: 34px; height: 49px; margin-top: 13px; background: #c1c1c1; }
.down { margin-top: auto; }
.hscroll { padding: 0 16px 4px 12px; }
.hscroll .thumb { width: 658px; height: 36px; margin-left: 15px; background: #bfbfbf; }
.end { margin-left: auto; }
.corner { background: #dadada; }
.flow-foot { display: flex; justify-content: flex-end; align-items: center; gap: 9px; height: 52px; flex: none; padding-right: 20px; border-top: 2px solid #c8c8c8; background: #f3f3f3; }
.flow-foot button { width: 40px; height: 40px; border: 2px solid #c8c8c8; background: #fff; }

.node { position: absolute; display: grid; height: 78px; border-radius: 5px; background: #2273b3; color: #fff; font-size: 34px; align-items: stretch; --dark: #18527f; --light: #2273b3; }
.node b { display: flex; align-items: center; justify-content: center; border-radius: 5px; background: var(--dark); font-size: 25px; font-weight: 400; z-index: 1; padding-bottom: 4px; }
.node span { display: flex; align-items: center; padding: 0 0 6px 31px; white-space: nowrap; }
.in, .out { position: absolute; top: 0; bottom: 0; display: flex; flex-direction: column; justify-content: center; gap: 7px; }
.in { left: -14px; }
.out { right: -14px; }
.in i, .out i { width: 27px; height: 27px; border-radius: 50%; background: var(--light); }
.in i { background: var(--dark); }
.event { left: 24px; top: 38px; width: 467px; grid-template-columns: 146px 1fr; --dark: #48526a; --light: #5a6882; background: var(--light); }
.sheet { left: 101px; top: 303px; width: 471px; height: 121px; grid-template-columns: 155px 1fr; border: 4px solid #00b3ff; }
.node-tools { position: absolute; left: 482px; top: 250px; width: 90px; height: 54px; display: grid; grid-template-columns: 50px 40px; background: #00b3ff; border-radius: 5px 5px 0 0; }
.node-tools button:first-child { border-right: 2px solid #7fd6ff; }
.util { left: 747px; top: 295px; width: 414px; grid-template-columns: 154px 1fr; }
.device { left: 1362px; top: 89px; width: 519px; height: 118px; grid-template-columns: 155px 1fr; }
.prompt { left: 1386px; top: 425px; width: 467px; height: 118px; grid-template-columns: 158px 1fr; }
.nav-a { left: 2250px; top: 72px; width: 520px; grid-template-columns: 223px 1fr; }
.nav-b { left: 2259px; top: 439px; width: 520px; grid-template-columns: 223px 1fr; }
.ring { position: absolute; border: 20px solid #5e35ff; z-index: 2; pointer-events: none; }
.sheet-ring { left: 56px; top: 216px; width: 570px; height: 277px; border-radius: 52px; }

/* inspector */
.inspector { width: 571px; flex: none; display: flex; flex-direction: column; background: #eeeff1; padding-top: 8px; }
.inspector > * { margin-left: 8px; }
.inspector .tabs button { flex: 1; }
.who { display: flex; flex-direction: column; align-items: center; height: 94px; padding-top: 13px; background: #fff; border-bottom: 2px solid #dcdcde; color: #8b8d94; }
.who a { color: #00a8f5; }
.spacer { height: 21px; background: #fff; border-bottom: 2px solid #f5f5f6; }
.fields { height: 468px; background: #fff; padding: 28px 24px 0 26px; }
.field { display: grid; grid-template-columns: auto 1fr; column-gap: 28px; align-items: center; height: 151px; grid-template-rows: 32px 61px; row-gap: 19px; align-content: start; }
.field label { font-weight: 700; font-size: 27px; color: #000; }
.field sup { font-size: 20px; font-weight: 400; line-height: 0; }
.row { position: relative; grid-column: 1 / -1; display: flex; gap: 18px; }
.kind { width: 61px; height: 61px; border: 2px solid #4a5162; border-radius: 4px; }
.custom { flex: 1; height: 58px; padding-bottom: 4px; border: 2px solid #4a5162; border-radius: 5px; color: #444a58; font-size: 25px; }
.row input { flex: 1; min-width: 0; height: 58px; padding: 0 4px 6px; border-bottom: 2px solid #dcdcde; color: #222; }
.abc i { font-size: 22px; line-height: 24px; color: #3b4252; }
.abc i:nth-child(1) { margin-bottom: 16px; }
.abc i:nth-child(3) { margin-top: 10px; }
.list-ring { left: 54px; right: -34px; top: -22px; height: 99px; border-radius: 22px; }
.advanced { justify-content: flex-start; gap: 13px; height: 74px; margin-top: 8px; padding-left: 35px; background: #fff; font-size: 24px; }
.tree { flex: 1; margin: 91px 0 0; background: #fff; }
.tree h2 { height: 41px; padding-left: 26px; background: #2f3747; color: #fff; font-size: 22px; line-height: 40px; font-weight: 700; }
.tree h3 { height: 70px; padding: 26px 0 0 33px; font-size: 25px; }
.tree ul { list-style: none; }
.tree li { display: flex; align-items: center; gap: 10px; height: 64px; padding-left: 34px; font-size: 28px; }
.tree li::before { content: ""; width: 14px; height: 14px; border: 3px solid #222; border-radius: 50%; }
.tree .on { background: #d8d9dd; }
```
